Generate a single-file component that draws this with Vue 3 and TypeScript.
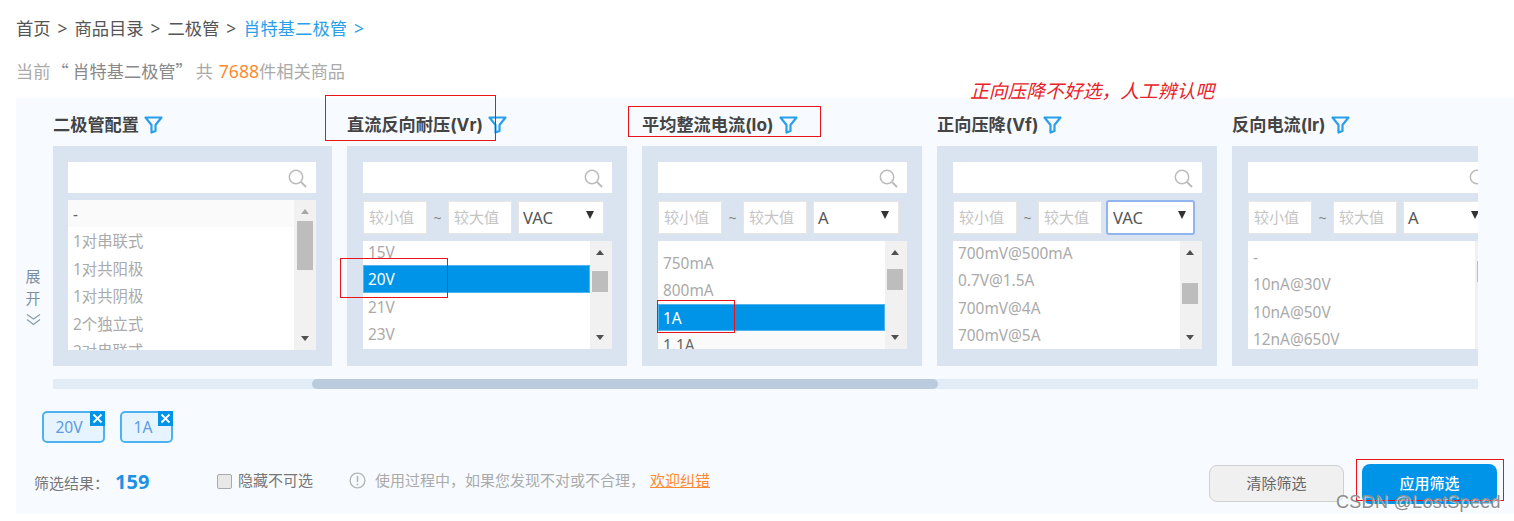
<script setup lang="ts">
interface Row {
  text: string
  state?: 'selected' | 'hover'
}
interface Column {
  title: string
  range: boolean
  unit?: string
  focused?: boolean
  offset: number
  thumbTop: number
  thumbHeight: number
  arrowsDark: boolean
  rows: Row[]
}

const crumbs: string[] = ['首页', '商品目录', '二极管']

const columns: Column[] = [
  {
    title: '二极管配置', range: false, offset: 0, thumbTop: 21, thumbHeight: 49, arrowsDark: false,
    rows: [
      { text: '-', state: 'hover' }, { text: '1对串联式' }, { text: '1对共阳极' },
      { text: '1对共阴极' }, { text: '2个独立式' }, { text: '2对串联式' }
    ]
  },
  {
    title: '直流反向耐压(Vr)', range: true, unit: 'VAC', offset: -3, thumbTop: 30, thumbHeight: 21, arrowsDark: true,
    rows: [{ text: '15V' }, { text: '20V', state: 'selected' }, { text: '21V' }, { text: '23V' }]
  },
  {
    title: '平均整流电流(Io)', range: true, unit: 'A', offset: 8, thumbTop: 28, thumbHeight: 21, arrowsDark: true,
    rows: [
      { text: '750mA' }, { text: '800mA' }, { text: '1A', state: 'selected' }, { text: '1.1A', state: 'hover' }
    ]
  },
  {
    title: '正向压降(Vf)', range: true, unit: 'VAC', focused: true, offset: -2, thumbTop: 42, thumbHeight: 21, arrowsDark: true,
    rows: [{ text: '700mV@500mA' }, { text: '0.7V@1.5A' }, { text: '700mV@4A' }, { text: '700mV@5A' }]
  },
  {
    title: '反向电流(Ir)', range: true, unit: 'A', offset: 2, thumbTop: 20, thumbHeight: 21, arrowsDark: true,
    rows: [{ text: '-' }, { text: '10nA@30V' }, { text: '10nA@50V' }, { text: '12nA@650V' }]
  }
]

const tags: string[] = ['20V', '1A']
</script>

<template>
  <div class="page">
    <nav class="crumbs">
      <template v-for="c in crumbs" :key="c">
        <span>{{ c }}</span><span class="sep">&gt;</span>
      </template>
      <span class="current">肖特基二极管</span><span class="sep current">&gt;</span>
    </nav>
    <p class="count">当前<span class="q">“ 肖特基二极管”</span>共 <em>7688</em>件相关商品</p>

    <section class="panel">
      <div class="top">
        <div class="side">
          <span>展</span>
          <span>开</span>
          <svg width="15" height="13" viewBox="0 0 15 13" fill="none" stroke="#8b9dab" stroke-width="1.3">
            <path d="M1 1.5 7.5 6 14 1.5" />
            <path d="M1 6.5 7.5 11.5 14 6.5" />
          </svg>
        </div>
        <div class="main">
          <div class="viewport">
            <div v-for="col in columns" :key="col.title" class="column">
              <h3 class="title">
                {{ col.title }}
                <svg width="19" height="18" viewBox="0 0 19 18" fill="none" stroke="#2a9fe9" stroke-width="2.2" stroke-linejoin="round">
                  <path d="M1.5 1.5H17.5L11.5 9V15L7.5 16.5V9Z" />
                </svg>
              </h3>
              <div class="card">
                <div class="search">
                  <svg width="19" height="19" viewBox="0 0 19 19" fill="none" stroke="#bbb">
                    <circle cx="8" cy="8" r="6.7" stroke-width="1.5" />
                    <path d="M13 13 18 18" stroke-width="2" />
                  </svg>
                </div>
                <div v-if="col.range" class="range">
                  <div class="num">较小值</div>
                  <span class="tilde">~</span>
                  <div class="num">较大值</div>
                  <div class="unit" :class="{ focused: col.focused }">
                    <span>{{ col.unit }}</span>
                    <i class="caret"></i>
                  </div>
                </div>
                <div class="list" :class="{ tall: !col.range }">
                  <div class="rows">
                    <div class="rows-inner" :style="{ marginTop: col.offset + 'px' }">
                      <div v-for="r in col.rows" :key="r.text" class="row" :class="r.state">{{ r.text }}</div>
                    </div>
                  </div>
                  <div class="vbar">
                    <i class="up" :class="{ dark: col.arrowsDark }"></i>
                    <b class="thumb" :style="{ top: col.thumbTop + 'px', height: col.thumbHeight + 'px' }"></b>
                    <i class="down"></i>
                  </div>
                </div>
              </div>
            </div>
          </div>
          <div class="hbar"><div class="hthumb"></div></div>
        </div>
      </div>

      <div class="tags">
        <div v-for="t in tags" :key="t" class="tag" :class="'tag-' + t">
          {{ t }}
          <span class="close">
            <svg width="11" height="11" viewBox="0 0 11 11" stroke="#fff" stroke-width="1.8"><path d="M1.5 1.5 9.5 9.5M9.5 1.5 1.5 9.5" /></svg>
          </span>
        </div>
      </div>

      <div class="footer">
        <span class="label">筛选结果：</span>
        <strong class="total">159</strong>
        <label class="check"><i class="box"></i>隐藏不可选</label>
        <svg class="info" width="17" height="17" viewBox="0 0 17 17" fill="none" stroke="#b5b5b5">
          <circle cx="8.5" cy="8.5" r="7.4" stroke-width="1.4" />
          <path d="M8.5 4v6M8.5 11.5v1.8" stroke-width="1.6" />
        </svg>
        <span class="tip">使用过程中，如果您发现不对或不合理，</span>
        <a class="link">欢迎纠错</a>
        <div class="actions">
          <button class="btn clear" type="button">清除筛选</button>
          <button class="btn apply" type="button">应用筛选</button>
        </div>
      </div>
    </section>

    <div class="note">正向压降不好选，人工辨认吧</div>
    <i class="mark m1"></i>
    <i class="mark m2"></i>
    <i class="mark m3"></i>
    <i class="mark m4"></i>
    <i class="mark m5"></i>
    <div class="watermark">CSDN @LostSpeed</div>
  </div>
</template>

<style scoped>
.page {
  position: relative;
  height: 521px;
  overflow: hidden;
  background: #fff;
  font-family: "Noto Sans", "Noto Sans CJK SC", sans-serif;
  color: #555;
}
.crumbs {
  display: flex;
  align-items: center;
  gap: 7px;
  height: 22px;
  padding: 18px 0 0 16px;
  font-size: 17.3px;
  line-height: 22px;
  color: #555;
}
.current { color: #2a9fe9; }
.count {
  height: 22px;
  margin: 20px 0 0;
  padding-left: 16px;
  font-family: "Noto Sans CJK SC", sans-serif;
  font-size: 17.2px;
  line-height: 22px;
  color: #aaa;
  white-space: nowrap;
}
.q { color: #888; margin: 0 3px 0 1px; }
.count em { font-family: "Noto Sans", sans-serif; font-style: normal; font-size: 17.6px; color: #ff8a33; margin-left: 2px; }
.panel {
  margin: 16px 0 0 16px;
  height: 416px;
  background: #f7fbff;
}
.top { display: flex; }
.side {
  width: 34px;
  margin-right: 3px;
  height: 290px;
  padding-bottom: 62px;
  box-sizing: border-box;
  display: flex;
  flex-direction: column;
  justify-content: flex-end;
  align-items: center;
  font-size: 15px;
  line-height: 22px;
  color: #7d8e9c;
}
.side svg { margin-top: 4px; }
.main { width: 1425px; padding-top: 14px; }
.viewport { display: flex; gap: 15px; overflow: hidden; }
.column { flex: 0 0 280px; }
.column:first-child { flex-basis: 279px; }
.title {
  display: flex;
  align-items: flex-start;
  height: 34px;
  margin: 0;
  font-family: Inter, "Noto Sans CJK SC", sans-serif;
  font-size: 17.2px;
  line-height: 26px;
  font-weight: 700;
  color: #444;
  white-space: pre;
}
.title svg { margin-top: 4px; margin-left: 1px; }
.card {
  height: 220px;
  box-sizing: border-box;
  padding: 16px 16px 0 15px;
  background: #d9e4f0;
}
.column + .column .card { padding-left: 16px; padding-right: 15px; }
.search {
  position: relative;
  height: 31px;
  background: #fff;
  display: flex;
  align-items: center;
  justify-content: flex-end;
  padding-right: 9px;
  box-sizing: border-box;
}
.search svg { margin-top: 1px; }
.range {
  display: flex;
  align-items: center;
  height: 34px;
  margin-top: 7px;
}
.num {
  width: 64px;
  height: 33px;
  box-sizing: border-box;
  border: 1px solid #e8e6e3;
  background: #fff;
  padding-left: 5px;
  font-size: 15px;
  line-height: 31px;
  color: #c4c4c4;
}
.tilde {
  width: 21px;
  text-align: center;
  font-size: 14px;
  color: #888;
}
.unit {
  width: 86px;
  height: 33px;
  margin-left: 6px;
  box-sizing: border-box;
  border: 1px solid #e8e6e3;
  background: #fff;
  padding: 0 9px 0 4px;
  display: flex;
  align-items: center;
  justify-content: space-between;
  font-size: 16.6px;
  color: #555;
}
.unit.focused {
  width: 89px;
  height: 35px;
  border: 2px solid #93b5ee;
  border-radius: 3px;
  margin-left: 4px;
  padding: 0 7px 0 5px;
}
.caret {
  width: 0;
  height: 0;
  margin-top: -4px;
  border-left: 4.5px solid transparent;
  border-right: 4.5px solid transparent;
  border-top: 8px solid #333;
}
.list {
  display: flex;
  height: 108px;
  margin-top: 7px;
  background: #fff;
}
.list.tall { height: 150px; }
.rows { flex: 1; min-width: 0; overflow: hidden; }
.row {
  height: 27.4px;
  box-sizing: border-box;
  padding-left: 5px;
  font-size: 15.4px;
  line-height: 30.5px;
  color: #aaa;
  white-space: nowrap;
  overflow: hidden;
}
.row.hover { background: #fafafa; color: #666; }
.row.selected { background: #0094e8; color: #fff; border: 1px solid #50b4ee; padding-left: 4px; line-height: 27.5px; }
.vbar {
  position: relative;
  flex: 0 0 22px;
  background: #f1f1f1;
}
.thumb {
  position: absolute;
  left: 2px;
  width: 16px;
  background: #bdbdbd;
}
.column:first-child .thumb { left: 3px; }
.up, .down {
  position: absolute;
  left: 6px;
  width: 0;
  height: 0;
  border-left: 4.5px solid transparent;
  border-right: 4.5px solid transparent;
}
.column:first-child .up, .column:first-child .down { left: 7px; }
.up { top: 9px; border-bottom: 5px solid #a8a8a8; }
.up.dark { border-bottom-color: #505050; }
.down { bottom: 9px; border-top: 5px solid #505050; }
.hbar {
  height: 10px;
  margin-top: 13px;
  background: #e1ecf7;
}
.hthumb {
  width: 626px;
  height: 10px;
  margin-left: 259px;
  border-radius: 5px;
  background: #b9cbdd;
}
.tags {
  display: flex;
  gap: 15px;
  height: 32px;
  margin-top: 22px;
  padding-left: 26px;
}
.tag {
  position: relative;
  box-sizing: border-box;
  width: 63px;
  height: 32px;
  padding: 1px 9px 0 0;
  border: 2px solid #4db2f1;
  border-radius: 5px;
  background: #e5f4ff;
  text-align: center;
  font-size: 15.6px;
  line-height: 27px;
  color: #5d9be0;
}
.tag-1A { width: 53px; padding-right: 7px; }
.close {
  position: absolute;
  top: -2px;
  right: -2px;
  width: 15px;
  height: 15px;
  display: flex;
  align-items: center;
  justify-content: center;
  background: #0094e8;
}
.footer {
  position: relative;
  display: flex;
  align-items: center;
  height: 40px;
  margin-top: 21px;
  padding: 0 17px 0 18px;
  font-size: 15px;
}
.label { color: #777; width: 81px; white-space: nowrap; padding-bottom: 3px; }
.total { width: 102px; font-size: 20px; line-height: 28px; font-weight: 700; color: #1e90e6; padding-bottom: 5px; }
.check {
  display: flex;
  align-items: center;
  width: 132px;
  color: #777;
  padding-bottom: 9px;
}
.box {
  width: 15px;
  height: 15px;
  box-sizing: border-box;
  margin-right: 6px;
  margin-top: 4px;
  border: 1px solid #aaa;
  border-radius: 2px;
  background: #e8e8e8;
}
.info { margin-right: 9px; margin-bottom: 8px; }
.tip { color: #aaa; width: 275px; white-space: nowrap; padding-bottom: 9px; }
.link {
  color: #ff8a33;
  text-decoration: underline;
  padding-bottom: 9px;
}
.actions {
  display: flex;
  align-items: flex-start;
  gap: 18px;
  margin-left: auto;
}
.btn {
  width: 135px;
  font: inherit;
  font-size: 15px;
  border-radius: 8px;
  padding: 0 0 3px;
}
.clear {
  height: 37px;
  margin-top: 1px;
  border: 1.5px solid #cfcfcf;
  background: #f0f0f0;
  color: #666;
}
.apply {
  height: 40px;
  border: 0;
  background: #0094e8;
  color: #fff;
  font-weight: 500;
}
.note {
  position: absolute;
  left: 970px;
  top: 78px;
  font-family: "Noto Sans CJK SC", sans-serif;
  font-size: 18.8px;
  line-height: 24px;
  font-style: italic;
  color: #e8212b;
  white-space: nowrap;
}
.mark {
  position: absolute;
  box-sizing: border-box;
  border: 1px solid #e8141c;
  pointer-events: none;
}
.m1 { left: 325px; top: 95px; width: 171px; height: 46px; }
.m2 { left: 628px; top: 106px; width: 193px; height: 31px; }
.m3 { left: 340px; top: 258px; width: 108px; height: 40px; }
.m4 { left: 657px; top: 300px; width: 78px; height: 33px; }
.m5 { left: 1356px; top: 459px; width: 148px; height: 42px; }
.watermark {
  position: absolute;
  left: 1336px;
  top: 490px;
  font-family: "Liberation Sans", sans-serif;
  font-size: 18px;
  line-height: 24px;
  letter-spacing: 0.3px;
  color: #8c8c8c;
  text-shadow: 1px 1px 1px rgba(255, 255, 255, 0.8);
  white-space: nowrap;
}
</style>

<style>
html, body { margin: 0; background: #fff; overflow: hidden; }
</style>
